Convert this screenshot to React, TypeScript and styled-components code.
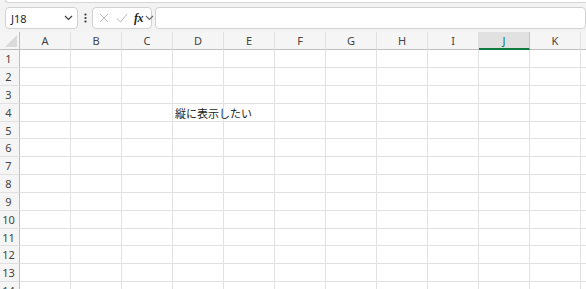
import React from "react";
import styled, { createGlobalStyle } from "styled-components";

const Global = createGlobalStyle`
  html, body { margin: 0; padding: 0; background: #f3f3f3; }
  body { font-family: "Segoe UI", "Noto Sans", "Liberation Sans", "Noto Sans CJK JP", sans-serif; }
`;

const Page = styled.div`
  width: 586px;
  height: 289px;
  overflow: hidden;
  background: #f3f3f3;
  display: flex;
  flex-direction: column;
  & > * { flex-shrink: 0; }
`;

const RibbonEdge = styled.div`
  height: 2px;
  margin-left: 5px;
  background: #ffffff;
  border-left: 1px solid #d6d6d6;
  border-bottom: 1px solid #d6d6d6;
  border-bottom-left-radius: 4px;
`;

const FormulaBar = styled.div`
  display: flex;
  align-items: center;
  height: 22px;
  margin-top: 4px;
  padding-left: 5px;
`;

const Box = styled.div<{ $w?: number }>`
  box-sizing: border-box;
  height: 22px;
  ${(p) => (p.$w ? `width: ${p.$w}px;` : "flex: 1;")}
  background: #ffffff;
  border: 1px solid #d1d1d1;
  border-radius: 4px;
  display: flex;
  align-items: center;
`;

const NameText = styled.span`
  font-size: 11px;
  color: #262626;
  padding-left: 5px;
  flex: 1;
`;

const Kebab = styled.div`
  width: 14px;
  display: flex;
  justify-content: center;
`;

const IconRow = styled.div`
  display: flex;
  align-items: center;
  padding-left: 3px;
`;

const Fx = styled.span`
  font-family: "Liberation Serif", "DejaVu Serif", serif;
  font-style: italic;
  font-weight: bold;
  font-size: 12px;
  color: #262626;
  margin-left: 5px;
  letter-spacing: -0.5px;
`;

const Gap = styled.div`
  height: 3px;
`;

const Grid = styled.div`
  display: grid;
  grid-template-columns: 20px repeat(12, 51px);
  background: #ffffff;
`;

const CornerCell = styled.div`
  position: relative;
  height: 18px;
  box-sizing: border-box;
  background: #f5f5f5;
  border-right: 1px solid #bfbfbf;
  border-bottom: 1px solid #bfbfbf;
`;

const CornerTri = styled.div`
  position: absolute;
  right: 2px;
  bottom: 2px;
  width: 0;
  height: 0;
  border-left: 12px solid transparent;
  border-bottom: 12px solid #dadada;
`;

const ColHead = styled.div<{ $sel?: boolean }>`
  height: 18px;
  box-sizing: border-box;
  background: ${(p) => (p.$sel ? "#e1e1e1" : "#f5f5f5")};
  border-right: 1px solid ${(p) => (p.$sel ? "#c6c6c6" : "#e0e0e0")};
  border-bottom: ${(p) => (p.$sel ? "2px solid #107c41" : "1px solid #bfbfbf")};
  font-size: 11px;
  color: ${(p) => (p.$sel ? "#107c41" : "#444444")};
  display: flex;
  align-items: center;
  justify-content: center;
  padding-top: ${(p) => (p.$sel ? "1px" : "0")};
`;

const RowHead = styled.div<{ $h: number }>`
  height: ${(p) => p.$h}px;
  box-sizing: border-box;
  background: #f5f5f5;
  border-right: 1px solid #bfbfbf;
  border-bottom: 1px solid #e0e0e0;
  font-size: 11px;
  color: #444444;
  display: flex;
  align-items: center;
  justify-content: center;
  padding-right: 2px;
`;

const Cell = styled.div<{ $h: number }>`
  height: ${(p) => p.$h}px;
  box-sizing: border-box;
  border-right: 1px solid #e1e1e1;
  border-bottom: 1px solid #e1e1e1;
  font-size: 11px;
  color: #222222;
  font-family: "Noto Sans CJK JP", "Noto Sans", sans-serif;
  white-space: nowrap;
  overflow: visible;
  display: flex;
  align-items: center;
  padding-left: 2px;
  position: relative;
  z-index: 1;
`;

const Chevron = ({ color = "#3a3a3a" }: { color?: string }) => (
  <svg width="9" height="6" viewBox="0 0 9 6">
    <path d="M1 1 L4.5 4.5 L8 1" fill="none" stroke={color} strokeWidth="1.1" />
  </svg>
);

const cols = ["A", "B", "C", "D", "E", "F", "G", "H", "I", "J", "K", "L"];
const rowHeights = [18, 18, 18, 18, 17, 18, 18, 18, 18, 18, 17, 18, 18, 18];

export default function App() {
  return (
    <Page>
      <Global />
      <RibbonEdge />
      <FormulaBar>
        <Box $w={73}>
          <NameText>J18</NameText>
          <span style={{ paddingRight: 4, display: "flex" }}>
            <Chevron />
          </span>
        </Box>
        <Kebab>
          <svg width="3" height="10" viewBox="0 0 3 10">
            <circle cx="1.5" cy="1.5" r="1.1" fill="#333" />
            <circle cx="1.5" cy="5" r="1.1" fill="#333" />
            <circle cx="1.5" cy="8.5" r="1.1" fill="#333" />
          </svg>
        </Kebab>
        <Box $w={60}>
          <IconRow>
            <svg width="14" height="14" viewBox="0 0 14 14" style={{ marginLeft: 1 }}>
              <path d="M3 3 L11 11 M11 3 L3 11" stroke="#b8b8b8" strokeWidth="1" fill="none" />
            </svg>
            <svg width="14" height="14" viewBox="0 0 14 14" style={{ marginLeft: 4 }}>
              <path d="M2 7.5 L5.5 11 L12 3" stroke="#b8b8b8" strokeWidth="1" fill="none" />
            </svg>
            <Fx>fx</Fx>
            <span style={{ display: "flex", marginLeft: 2 }}>
              <Chevron color="#6a6a6a" />
            </span>
          </IconRow>
        </Box>
        <span style={{ width: 3 }} />
        <Box />
      </FormulaBar>
      <Gap />
      <Grid>
        <CornerCell>
          <CornerTri />
        </CornerCell>
        {cols.map((c) => (
          <ColHead key={c} $sel={c === "J"}>
            {c === "L" ? "" : c}
          </ColHead>
        ))}
        {rowHeights.map((h, i) => (
          <React.Fragment key={i}>
            <RowHead $h={h}>{i + 1}</RowHead>
            {cols.map((c) => (
              <Cell key={c} $h={h}>
                {i === 3 && c === "D" ? "縦に表示したい" : ""}
              </Cell>
            ))}
          </React.Fragment>
        ))}
      </Grid>
    </Page>
  );
}
